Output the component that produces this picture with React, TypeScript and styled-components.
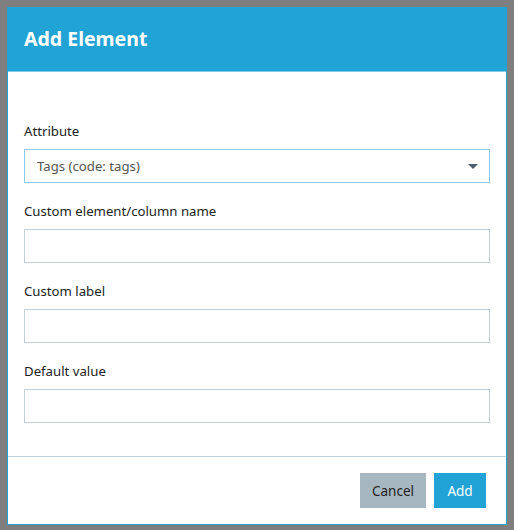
import React from 'react';
import styled, { createGlobalStyle } from 'styled-components';

const GlobalStyle = createGlobalStyle`
  html, body {
    margin: 0;
    padding: 0;
    background: #7f7f7f;
  }
  * {
    box-sizing: border-box;
  }
`;

const Backdrop = styled.div`
  width: 514px;
  height: 530px;
  padding: 7px;
  background: #7f7f7f;
  font-family: 'Noto Sans', 'Open Sans', sans-serif;
`;

const Dialog = styled.div`
  width: 500px;
  background: #fff;
  border: 1px solid #22a3d6;
  display: flex;
  flex-direction: column;
`;

const Header = styled.div`
  height: 64px;
  background: #22a3d6;
  border-bottom: 1px solid #7cc9ea;
  display: flex;
  align-items: center;
  padding: 0 16px 2px;
`;

const Title = styled.h2`
  margin: 0;
  font-size: 19.5px;
  font-weight: 700;
  color: #fff;
`;

const Body = styled.div`
  padding: 49px 16px 15px;
`;

const Field = styled.div`
  display: flex;
  flex-direction: column;
  margin-bottom: 18px;
`;

const Label = styled.label`
  font-size: 13.2px;
  line-height: 20px;
  color: #222;
  margin-bottom: 8px;
`;

const Input = styled.input<{ $focused?: boolean }>`
  height: 34px;
  width: 100%;
  border: 1px solid ${(p) => (p.$focused ? '#8ecbe8' : '#c3cfd6')};
  padding: 0 12px;
  font-family: inherit;
  font-size: 13.2px;
  color: #555;
  outline: none;
`;

const SelectBox = styled.div`
  position: relative;
  height: 34px;
  border: 1px solid #8ecbe8;
  display: flex;
  align-items: center;
  padding: 0 12px;
  font-size: 13.2px;
  color: #555;
`;

const Caret = styled.span`
  position: absolute;
  right: 11px;
  top: 14px;
  width: 0;
  height: 0;
  border-left: 5px solid transparent;
  border-right: 5px solid transparent;
  border-top: 5px solid #4b5c68;
`;

const Footer = styled.div`
  border-top: 1px solid #c3d2da;
  display: flex;
  justify-content: flex-end;
  gap: 8px;
  padding: 16px 20px 16px;
`;

const Button = styled.button<{ $primary?: boolean }>`
  height: 35px;
  min-width: ${(p) => (p.$primary ? '52px' : '66px')};
  padding: 0 12px;
  border: none;
  font-family: inherit;
  font-size: 13.5px;
  background: ${(p) => (p.$primary ? '#22a3d6' : '#a7b7c0')};
  color: ${(p) => (p.$primary ? '#fff' : '#222')};
  cursor: pointer;
`;

export default function App() {
  return (
    <Backdrop>
      <GlobalStyle />
      <Dialog>
        <Header>
          <Title>Add Element</Title>
        </Header>
        <Body>
          <Field>
            <Label>Attribute</Label>
            <SelectBox>
              Tags (code: tags)
              <Caret />
            </SelectBox>
          </Field>
          <Field>
            <Label>Custom element/column name</Label>
            <Input />
          </Field>
          <Field>
            <Label>Custom label</Label>
            <Input />
          </Field>
          <Field>
            <Label>Default value</Label>
            <Input />
          </Field>
        </Body>
        <Footer>
          <Button>Cancel</Button>
          <Button $primary>Add</Button>
        </Footer>
      </Dialog>
    </Backdrop>
  );
}
